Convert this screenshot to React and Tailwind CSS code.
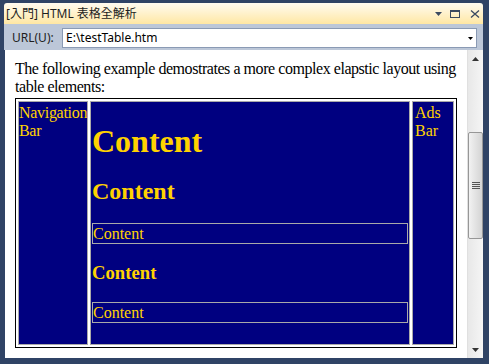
import React from 'react';

const serif = { fontFamily: '"Liberation Serif", "Times New Roman", serif' };
const ui = { fontFamily: '"Noto Sans", "Noto Sans CJK TC", sans-serif' };

const TitleIcons = () => (
  <div className="ml-auto flex items-center gap-[6px] pr-[3px]">
    <svg width="7" height="4" viewBox="0 0 7 4" className="mr-[1px]">
      <path d="M0 0 H7 L3.5 4 Z" fill="#3b4a60" />
    </svg>
    <svg width="10" height="8" viewBox="0 0 10 8" className="ml-[1px]">
      <rect x="0.5" y="0.5" width="9" height="7" fill="none" stroke="#3b4a60" />
      <rect x="0" y="0" width="10" height="2" fill="#3b4a60" />
    </svg>
    <svg width="10" height="8" viewBox="0 0 10 8" className="ml-[4px]">
      <path d="M1 0.5 L9 7.5 M9 0.5 L1 7.5" stroke="#3b4a60" strokeWidth="1.3" />
    </svg>
  </div>
);

const Scrollbar = () => (
  <div className="w-[16px] flex flex-col bg-linear-to-r from-[#e8e8e8] to-[#f5f5f5] border-l border-[#e0e0e0]">
    <div className="h-[17px] flex items-center justify-center">
      <svg width="7" height="4" viewBox="0 0 7 4">
        <path d="M3.5 0 L7 4 H0 Z" fill="#333" />
      </svg>
    </div>
    <div className="h-[65px]" />
    <div className="h-[107px] w-[15px] self-end rounded-[2px] border border-[#979797] bg-linear-to-r from-[#f2f2f2] to-[#d4d4d4] flex flex-col items-center justify-center gap-[1px]">
      <div className="w-[8px] h-px bg-[#555]" />
      <div className="w-[8px] h-px bg-[#555]" />
      <div className="w-[8px] h-px bg-[#555]" />
      <div className="w-[8px] h-px bg-[#555]" />
    </div>
    <div className="flex-1" />
    <div className="h-[17px] flex items-center justify-center">
      <svg width="7" height="4" viewBox="0 0 7 4">
        <path d="M0 0 H7 L3.5 4 Z" fill="#333" />
      </svg>
    </div>
  </div>
);

const Box = ({ children }) => (
  <div className="h-[21px] border border-[#a9a9a9] text-[16px] leading-[19px]">{children}</div>
);

export default function App() {
  return (
    <div className="w-[489px] h-[364px] bg-[#2f4365] pt-[3px] pl-[4px] pr-[6px] pb-[6px] flex flex-col">
      <div
        className="h-[21px] rounded-t-[3px] bg-linear-to-b from-[#fffbf0] to-[#ffe7a3] flex items-center pl-[2px] text-[12px] leading-[16px] text-[#1e1e1e]"
        style={ui}
      >
        <span>[入門] HTML 表格全解析</span>
        <TitleIcons />
      </div>

      <div className="h-[26px] bg-[#bcc7d8] flex items-start pt-[4px] pl-[8px]" style={ui}>
        <div className="w-[50px] h-[20px] flex items-center text-[12px] leading-[16px] text-[#1e1e1e]">URL(U):</div>
        <div className="w-[415px] h-[20px] bg-white border border-[#8a9ab4] flex items-center pl-[3px] pr-[3px] text-[12px] leading-[16px] text-black">
          <span>E:\testTable.htm</span>
          <svg width="5" height="3" viewBox="0 0 5 3" className="ml-auto">
            <path d="M0 0 H5 L2.5 3 Z" fill="#000" />
          </svg>
        </div>
      </div>

      <div className="flex-1 flex pl-px">
        <div className="flex-1 bg-white pt-[10px] pl-[10px]" style={serif}>
          <p className="w-[450px] text-[16px] leading-[18px] tracking-[-0.45px] text-black">
            The following example demostrates a more complex elapstic layout using table elements:
          </p>
          <div className="mt-[2px] w-[442px] h-[250px] border border-black p-[2px] flex gap-[2px] text-[#ffd200]">
            <div className="w-[70px] border border-[#a9a9a9] bg-[#000080] pt-[2px] text-[16px] leading-[18px] tracking-[-0.3px]">
              Navigation Bar
            </div>
            <div className="w-[320px] border border-[#a9a9a9] bg-[#000080] p-px flex flex-col">
              <div className="h-[120px] pt-[22px]">
                <h1 className="text-[32px] leading-[32px] font-bold">Content</h1>
                <h2 className="mt-[22px] text-[24px] leading-[24px] font-bold">Content</h2>
              </div>
              <Box>Content</Box>
              <div className="h-[58px] pt-[19px]">
                <h3 className="text-[18.7px] leading-[19px] font-bold">Content</h3>
              </div>
              <Box>Content</Box>
              <div className="flex-1" />
            </div>
            <div className="flex-1 border border-[#a9a9a9] bg-[#000080] pt-[2px] pl-[2px] text-[16px] leading-[18px]">
              Ads Bar
            </div>
          </div>
        </div>
        <Scrollbar />
      </div>
    </div>
  );
}
